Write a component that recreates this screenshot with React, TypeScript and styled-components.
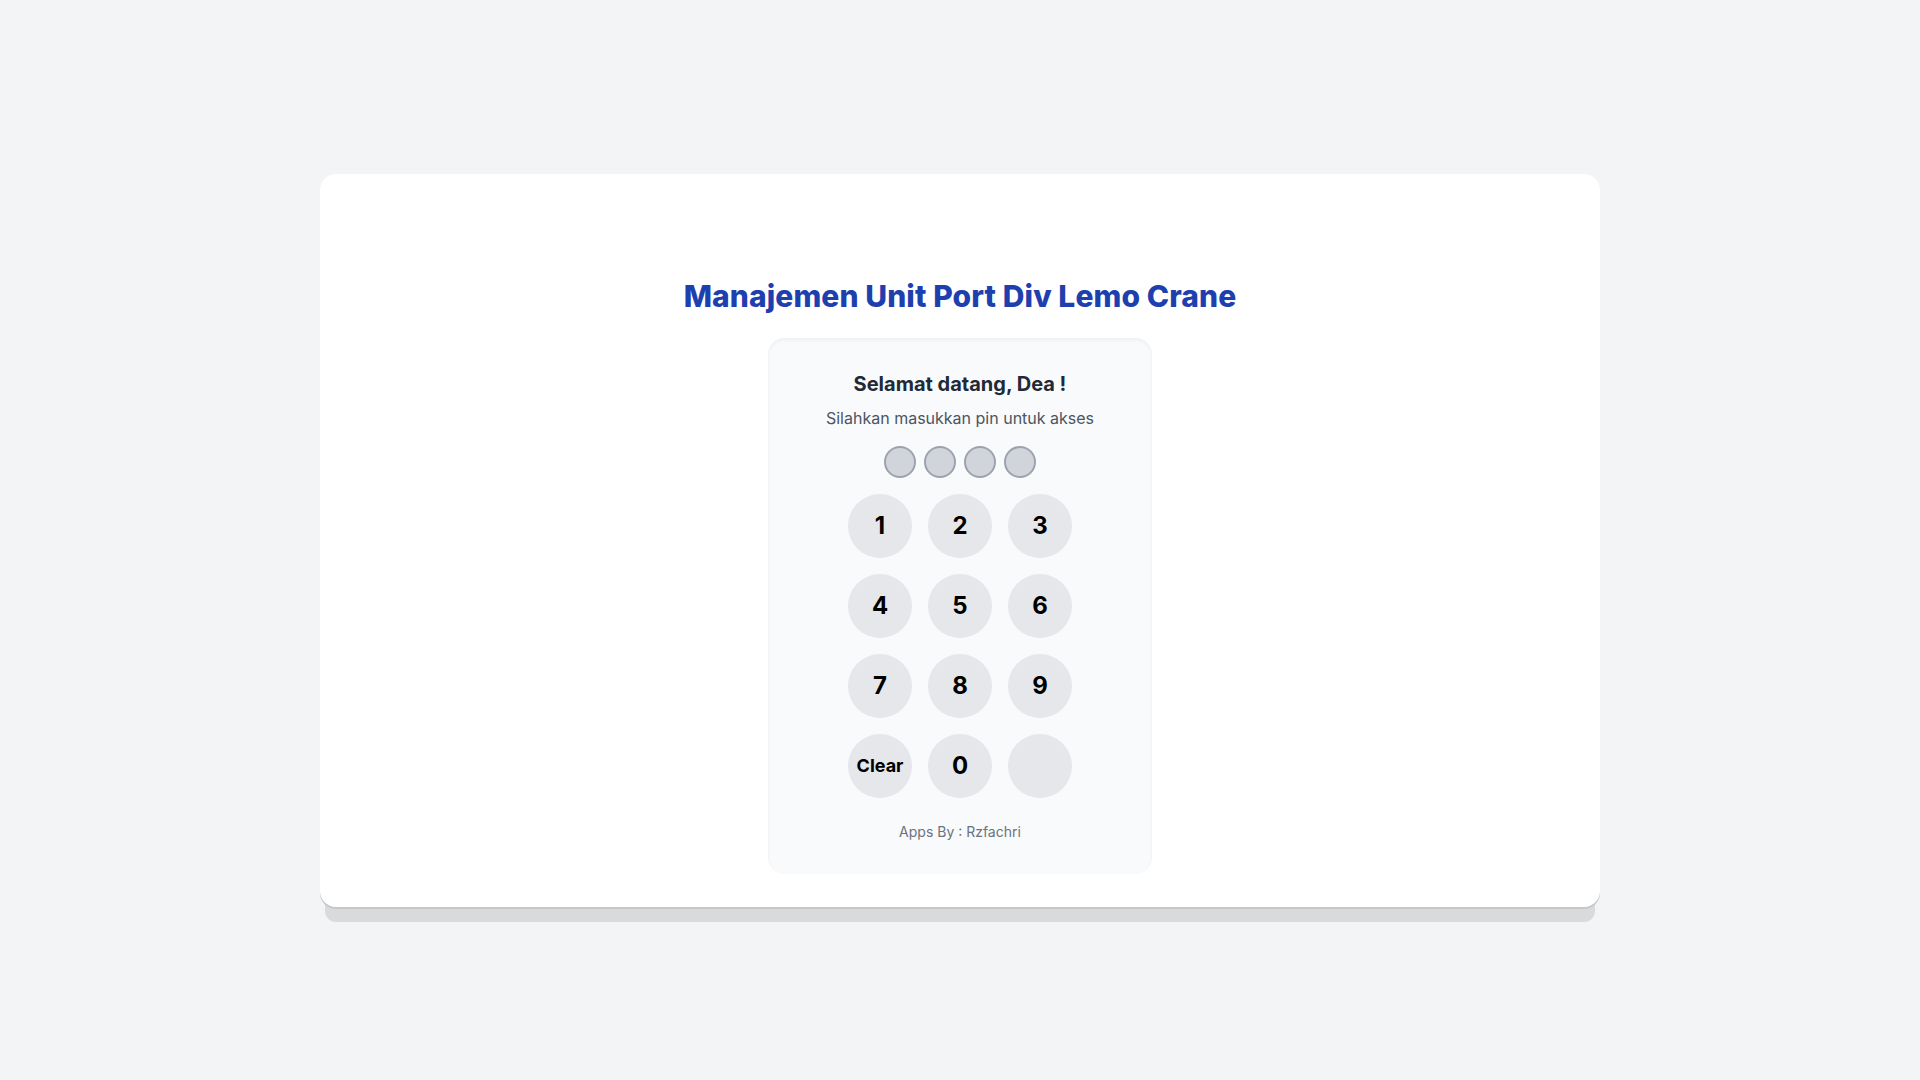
import styled, { createGlobalStyle } from "styled-components";

const GlobalStyle = createGlobalStyle`
    * {
        box-sizing: border-box;
    }

    body {
        margin: 0;
        background: #f3f4f6;
        font-family: Inter, "Noto Sans", "Liberation Sans", sans-serif;
    }
`;

const Page = styled.div`
    min-height: 100vh;
    display: flex;
    align-items: center;
    justify-content: center;
`;

const Panel = styled.main`
    width: 1280px;
    padding: 104px 32px 33px;
    background: #ffffff;
    border-radius: 16px;
    display: flex;
    flex-direction: column;
    align-items: center;
    box-shadow: 0 2px 0 #c6c7c9, 0 20px 0 -5px #d9dadc;
`;

const Title = styled.h1`
    margin: 0 0 24px;
    font-size: 30px;
    line-height: 36px;
    font-weight: 800;
    letter-spacing: 0.1px;
    color: #1e40af;
    text-align: center;
`;

const PinCard = styled.section`
    width: 384px;
    padding: 32px;
    background: #f9fafb;
    border-radius: 16px;
    box-shadow: inset 0 2px 4px 0 rgba(0, 0, 0, 0.05);
    display: flex;
    flex-direction: column;
    align-items: center;
`;

const Greeting = styled.h2`
    margin: 0 0 8px;
    font-size: 20px;
    line-height: 28px;
    font-weight: 700;
    color: #1f2937;
`;

const Hint = styled.p`
    margin: 0 0 16px;
    font-size: 16px;
    line-height: 24px;
    color: #4b5563;
`;

const Dots = styled.div`
    display: flex;
    gap: 8px;
    margin-bottom: 16px;
`;

const Dot = styled.span<{ $filled?: boolean }>`
    width: 32px;
    height: 32px;
    border-radius: 50%;
    border: 2px solid #9ca3af;
    background: ${props => (props.$filled ? "#1e40af" : "#d1d5db")};
`;

const Keypad = styled.div`
    display: grid;
    grid-template-columns: repeat(3, 64px);
    gap: 16px;
    margin-bottom: 24px;
`;

const Key = styled.button<{ $small?: boolean }>`
    width: 64px;
    height: 64px;
    border: none;
    border-radius: 50%;
    background: #e5e7eb;
    color: #000000;
    font-family: inherit;
    font-size: ${props => (props.$small ? "18px" : "24px")};
    font-weight: 700;
    padding: 0;
    cursor: pointer;
    display: flex;
    align-items: center;
    justify-content: center;
`;

const Credit = styled.p`
    margin: 0;
    font-size: 14px;
    line-height: 20px;
    color: #6b7280;
`;

const keys = ["1", "2", "3", "4", "5", "6", "7", "8", "9", "Clear", "0", ""];

const App = () => {
    return (
        <Page>
            <GlobalStyle />
            <Panel>
                <Title>Manajemen Unit Port Div Lemo Crane</Title>
                <PinCard>
                    <Greeting>Selamat datang, Dea !</Greeting>
                    <Hint>Silahkan masukkan pin untuk akses</Hint>
                    <Dots>
                        {[0, 1, 2, 3].map(i => (
                            <Dot key={i} />
                        ))}
                    </Dots>
                    <Keypad>
                        {keys.map((k, i) => (
                            <Key key={i} $small={k === "Clear"}>
                                {k}
                            </Key>
                        ))}
                    </Keypad>
                    <Credit>Apps By : Rzfachri</Credit>
                </PinCard>
            </Panel>
        </Page>
    );
};

export default App;
